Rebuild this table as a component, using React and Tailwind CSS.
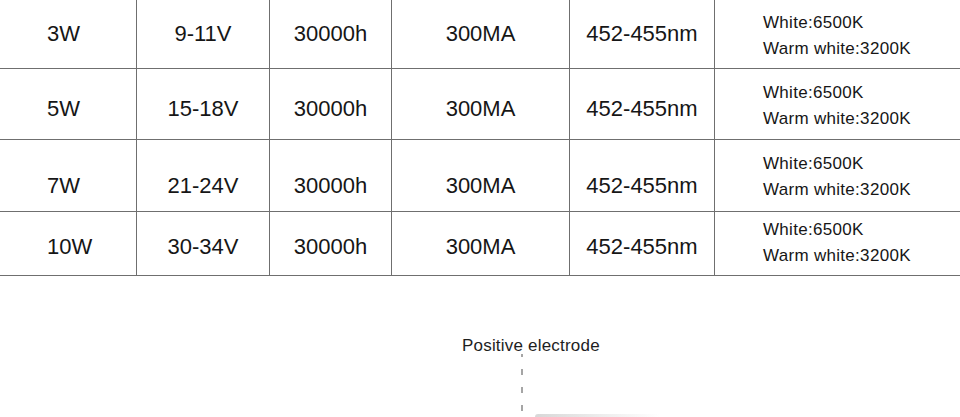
import React from "react";

const rows = [
  { w: "3W", v: "9-11V", h: "h-[69px]", pt: "pt-[23px]", st: "pt-[10px]" },
  { w: "5W", v: "15-18V", h: "h-[71px]", pt: "pt-[29px]", st: "pt-[11px]" },
  { w: "7W", v: "21-24V", h: "h-[72px]", pt: "pt-[35px]", st: "pt-[11px]" },
  { w: "10W", v: "30-34V", h: "h-[64px]", pt: "pt-[24px]", st: "pt-[5px]" },
];

export default function App() {
  return (
    <div
      className="w-[960px] h-[417px] bg-white overflow-hidden text-[#161616]"
      style={{ fontFamily: '"Liberation Sans", Arial, sans-serif' }}
    >
      <div className="flex flex-col">
        {rows.map((r, i) => (
          <div
            key={i}
            className={`grid grid-cols-[137px_133px_122px_178px_145px_245px] border-b border-[#6f6f6f] ${r.h}`}
          >
            <div className={`border-r border-[#6f6f6f] pl-[47px] text-[22px] leading-[22px] ${r.pt}`}>
              {r.w}
            </div>
            <div className={`border-r border-[#6f6f6f] text-center text-[22px] leading-[22px] ${r.pt}`}>
              {r.v}
            </div>
            <div className={`border-r border-[#6f6f6f] text-center text-[22px] leading-[22px] ${r.pt}`}>
              30000h
            </div>
            <div className={`border-r border-[#6f6f6f] text-center text-[22px] leading-[22px] ${r.pt}`}>
              300MA
            </div>
            <div className={`border-r border-[#6f6f6f] text-center text-[22px] leading-[22px] ${r.pt}`}>
              452-455nm
            </div>
            <div className={`pl-[48px] text-[17px] leading-[26px] tracking-[0.3px] ${r.st}`}>
              <div>White:6500K</div>
              <div>Warm white:3200K</div>
            </div>
          </div>
        ))}
      </div>
      <div className="relative h-[141px]">
        <div className="absolute left-[462px] top-[61px] text-[17px] leading-[17px] tracking-[0.2px] text-[#1e1e1e] whitespace-nowrap">
          Positive electrode
        </div>
        <svg className="absolute left-[520px] top-[78px]" width="4" height="64">
          <line
            x1="2"
            y1="0"
            x2="2"
            y2="64"
            stroke="#6a6a6a"
            strokeWidth="1.2"
            strokeDasharray="6 12"
            strokeDashoffset="3"
          />
        </svg>
        <div className="absolute left-[535px] top-[138px] w-[125px] h-[3px] rounded-tl-[3px] bg-gradient-to-r from-[#d8d8d8] via-[#ececec] to-transparent" />
      </div>
    </div>
  );
}
